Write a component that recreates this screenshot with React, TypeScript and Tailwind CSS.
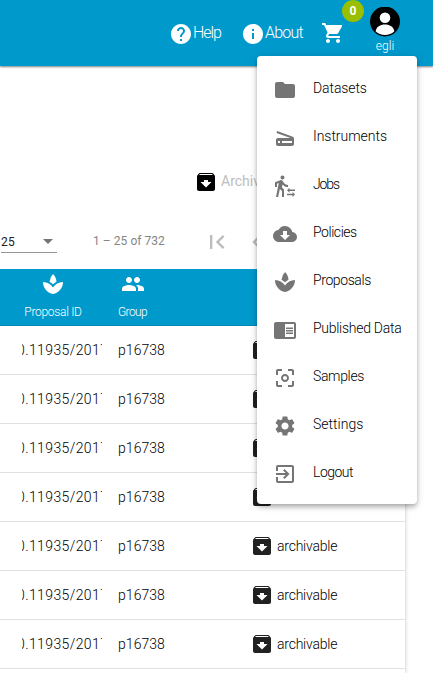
import type { ReactNode } from "react";
import {
  MdArrowDropDown,
  MdCenterFocusWeak,
  MdChevronLeft,
  MdChromeReaderMode,
  MdCloudDownload,
  MdExitToApp,
  MdFirstPage,
  MdFolder,
  MdHelp,
  MdInfo,
  MdPeople,
  MdScanner,
  MdSettings,
  MdShoppingCart,
  MdSpa,
  MdTransferWithinAStation,
} from "react-icons/md";

type MenuEntry = { label: string; icon: ReactNode; tracking: string };

const menu: MenuEntry[] = [
  { label: "Datasets", icon: <MdFolder />, tracking: "tracking-[-0.1px]" },
  { label: "Instruments", icon: <MdScanner />, tracking: "tracking-[-0.04px]" },
  { label: "Jobs", icon: <MdTransferWithinAStation />, tracking: "tracking-[-1.1px]" },
  { label: "Policies", icon: <MdCloudDownload />, tracking: "tracking-[-0.45px]" },
  { label: "Proposals", icon: <MdSpa />, tracking: "tracking-[-0.4px]" },
  { label: "Published Data", icon: <MdChromeReaderMode />, tracking: "tracking-[-0.28px]" },
  { label: "Samples", icon: <MdCenterFocusWeak />, tracking: "tracking-[-0.35px]" },
  { label: "Settings", icon: <MdSettings />, tracking: "tracking-[0px]" },
  { label: "Logout", icon: <MdExitToApp />, tracking: "tracking-[-0.5px]" },
];

function ArchiveIcon({ className = "" }: { className?: string }) {
  return (
    <svg viewBox="0 0 24 24" fill="currentColor" className={`size-6 shrink-0 ${className}`}>
      <path d="M20.54 5.23l-1.39-1.680C18.880 3.210 18.470 3 18 3H6c-.47 0-.88.21-1.160.55L3.460 5.230C3.170 5.570 3 6.020 3 6.500V19c0 1.100.9 2 2 2h14c1.100 0 2-.9 2-2V6.500c0-.48-.17-.93-.46-1.270zM12 17.500L6.500 12H10v-2h4v2h3.500L12 17.500zM5.120 5l.81-1h12l.94 1H5.120z" />
    </svg>
  );
}

function TopBar() {
  return (
    <header className="relative z-10 flex h-[66px] items-start bg-[#0099cc] pl-[169px] text-white shadow-[0_1px_2px_rgba(0,0,0,0.5)]">
      <div className="flex h-[66px] w-[72px] items-center">
        <MdHelp className="mt-0.5 size-6 shrink-0" />
        <span className="text-base font-light tracking-[-1.1px]">Help</span>
      </div>
      <div className="flex h-[66px] w-20 items-center">
        <MdInfo className="mt-0.5 size-6 shrink-0" />
        <span className="text-base font-light tracking-[-0.8px]">About</span>
      </div>
      <div className="relative mt-[21px] size-6">
        <MdShoppingCart className="size-6" />
        <span className="absolute left-[21px] top-[-21px] flex size-[22px] items-center justify-center rounded-full bg-[#99bf00] text-xs font-bold">
          0
        </span>
      </div>
      <div className="ml-[25px] mt-[7px] flex w-[30px] flex-col items-center">
        <svg viewBox="0 0 30 30" className="size-[30px]">
          <circle cx="15" cy="14.5" r="15" fill="#000" />
          <circle cx="15" cy="10.7" r="5.3" fill="#fff" />
          <path d="M5.600 24.200c.9-4.700 4.600-6.800 9.400-6.800s8.500 2.100 9.400 6.800a13.600 13.600 0 0 1-18.800 0Z" fill="#fff" />
        </svg>
        <span className="mt-px text-xs font-light leading-4">egli</span>
      </div>
    </header>
  );
}

function Row() {
  return (
    <div className="flex h-[49px] items-center border-b border-[#e0e0e0] pl-[22px] text-sm text-[#212121]">
      <div className="w-20 overflow-hidden whitespace-nowrap text-black">
        <span className="-ml-[5px] font-light tracking-[0.4px]">0.11935/2017</span>
      </div>
      <span className="ml-4 w-[132px] font-light tracking-[0.05px] text-black">p16738</span>
      <ArchiveIcon />
      <span className="ml-[3px] font-light tracking-[-0.22px] text-black">archivable</span>
    </div>
  );
}

export default function App() {
  return (
    <div className="relative h-[673px] w-[433px] overflow-hidden bg-white font-[Roboto,sans-serif]">
      <TopBar />
      <main className="h-[607px] w-[405px] bg-white shadow-[0_1px_4px_rgba(0,0,0,0.25)]">
        <div className="h-[149px] pl-[194px] pt-[104px]">
          <div className="flex items-center text-sm text-[#bdbdbd]">
            <ArchiveIcon className="text-black" />
            <span className="ml-[3px] mt-[-2px]">Archive</span>
          </div>
        </div>
        <div className="flex h-[54px] items-center pl-px text-xs">
          <div className="flex h-[22px] w-14 items-center justify-between border-b border-[#949494] text-[#212121]">
            <span className="tracking-[0.2px]">25</span>
            <MdArrowDropDown className="mr-[-3px] mt-[-1px] size-6 text-[#757575]" />
          </div>
          <span className="ml-[36px] mt-[-2px] w-[110px] tracking-[0.05px] text-[#858585]">1 – 25 of 732</span>
          <MdFirstPage className="size-7 text-[#bdbdbd]" />
          <MdChevronLeft className="ml-3 size-7 text-[#bdbdbd]" />
        </div>
        <div className="flex h-[57px] border-b border-[#0087b4] bg-[#0099cc] pt-[3px] text-xs text-white">
          <div className="ml-[22px] flex w-[62px] flex-col items-center">
            <MdSpa className="size-6" />
            <span className="mt-2 whitespace-nowrap font-light leading-4 tracking-[-0.3px]">Proposal ID</span>
          </div>
          <div className="ml-[34px] w-[29px]">
            <MdPeople className="ml-[3px] size-6" />
            <span className="mt-2 block whitespace-nowrap font-light leading-4 tracking-[-0.6px]">Group</span>
          </div>
        </div>
        {Array.from({ length: 8 }, (_, index) => (
          <Row key={index} />
        ))}
      </main>
      <nav className="absolute left-[257px] top-14 z-20 h-[448px] w-40 rounded bg-white py-2 shadow-[0_2px_4px_-1px_rgba(0,0,0,0.2),0_4px_5px_rgba(0,0,0,0.14),0_1px_10px_rgba(0,0,0,0.12)]">
        {menu.map(({ label, icon, tracking }) => (
          <div key={label} className="flex h-12 items-center pl-4 text-sm text-black">
            <span className="mt-1 text-2xl text-[#757575]">{icon}</span>
            <span className={`ml-4 whitespace-nowrap font-light ${tracking}`}>{label}</span>
          </div>
        ))}
      </nav>
    </div>
  );
}
